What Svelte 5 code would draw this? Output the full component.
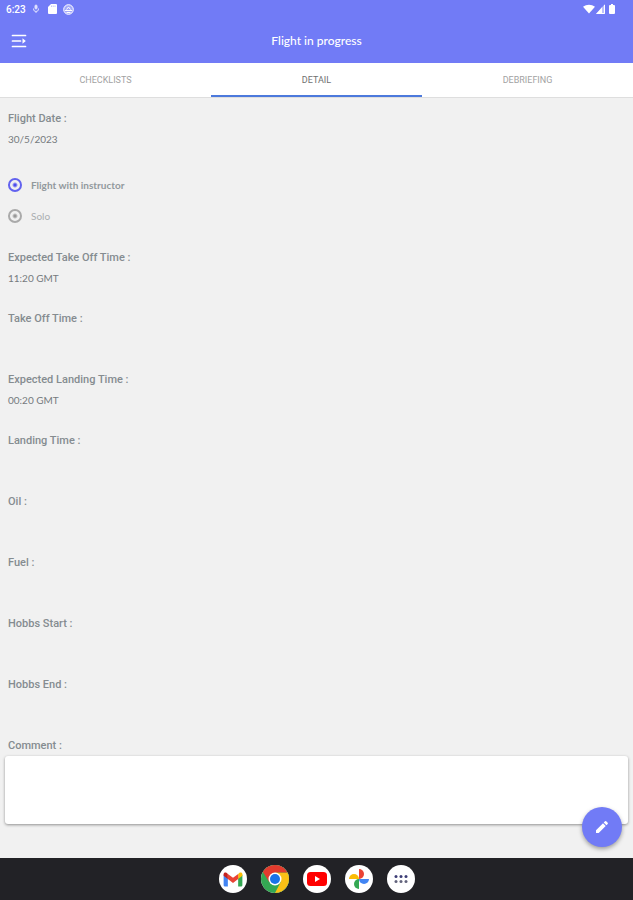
<script lang="ts">
  const tabs = ['CHECKLISTS', 'DETAIL', 'DEBRIEFING'];
  const fields = [
    { label: 'Expected Take Off Time :', value: '11:20 GMT' },
    { label: 'Take Off Time :', value: '' },
    { label: 'Expected Landing Time :', value: '00:20 GMT' },
    { label: 'Landing Time :', value: '' },
    { label: 'Oil :', value: '' },
    { label: 'Fuel :', value: '' },
    { label: 'Hobbs Start :', value: '' },
    { label: 'Hobbs End :', value: '' },
  ];

  let activeTab = $state('DETAIL');
  let crew = $state('instructor');
  let comment = $state('');
</script>

<div class="screen">
  <header class="top">
    <div class="status">
      <div class="status-side">
        <span>6:23</span>
        <svg width="8" height="10" viewBox="0 0 8 10" fill="none" stroke="#dfe1ff">
          <rect x="3" y="1" width="2" height="4" rx="1" fill="#dfe1ff" />
          <path d="M1.5 4.5V5a2.500 2.500 0 0 0 5 0v-.5M4 7.500V9" />
        </svg>
        <svg class="card" width="9" height="10" viewBox="0 0 9 10">
          <path d="M3 0h5a1 1 0 0 1 1 1v8a1 1 0 0 1-1 1H1a1 1 0 0 1-1-1V3z" fill="#fff" />
          <path d="M3.500 1.500v1.500M5.200 1.500v1.500M7 1.500v1.500" stroke="#aab0fb" stroke-width=".7" />
        </svg>
        <svg width="11" height="11" viewBox="0 0 11 11" fill="none" stroke="#fff">
          <circle cx="5.500" cy="5.500" r="4.800" fill="#a2a8fa" />
          <path d="M2 6.500h7M3.500 8.500h4" />
          <path d="M3.500 5.500l2-2.500 2 2.500" />
        </svg>
      </div>
      <div class="status-side icons">
        <svg width="12" height="10" viewBox="0 0 12 10" fill="#fff">
          <path d="M0 2.800C3.500 0 8.500 0 12 2.800L6 9.500z" />
        </svg>
        <svg width="9" height="10" viewBox="0 0 9 10">
          <path d="M9 0v10H0z" fill="#bdc1fd" />
          <path d="M6 3.300V10H0z" fill="#fff" />
          <path d="M8.500 1v8.500H1" fill="none" stroke="#fff" />
        </svg>
        <svg class="battery" width="6" height="10" viewBox="0 0 6 10" fill="#fff">
          <path d="M2 0h2v1h1a1 1 0 0 1 1 1v7a1 1 0 0 1-1 1H1a1 1 0 0 1-1-1V2a1 1 0 0 1 1-1h1z" />
        </svg>
      </div>
    </div>
    <div class="bar">
      <button class="menu" type="button" aria-label="Menu">
        <svg width="16" height="14" viewBox="0 0 16 14" fill="none" stroke="#fff" stroke-width="1.700" stroke-linecap="round">
          <path d="M1.500 1.500h13M1.500 7h8M1.500 12.500h13" />
          <path d="M11.500 4.200L14.800 7l-3.300 2.800z" fill="#fff" stroke="none" />
        </svg>
      </button>
      <h1>Flight in progress</h1>
    </div>
  </header>

  <nav class="tabs">
    {#each tabs as tab (tab)}
      <button type="button" class:active={tab === activeTab} onclick={() => (activeTab = tab)}>
        {tab}
      </button>
    {/each}
  </nav>

  <main>
    <div class="field">
      <h2>Flight Date :</h2>
      <p>30/5/2023</p>
    </div>

    <div class="crew">
      <label class:selected={crew === 'instructor'}>
        <input type="radio" name="crew" value="instructor" bind:group={crew} />
        <span>Flight with instructor</span>
      </label>
      <label class:selected={crew === 'solo'}>
        <input type="radio" name="crew" value="solo" bind:group={crew} />
        <span>Solo</span>
      </label>
    </div>

    {#each fields as field (field.label)}
      <div class="field">
        <h2>{field.label}</h2>
        <p>{field.value}</p>
      </div>
    {/each}

    <label class="comment-label" for="comment">Comment :</label>
    <textarea id="comment" bind:value={comment}></textarea>

    <button class="fab" type="button" aria-label="Edit flight">
      <svg width="16" height="16" viewBox="0 0 16 16" fill="#fff">
        <path d="M2 11.300V14h2.700l7-7L9 4.300zM13.700 5a.9.9 0 0 0 0-1.200l-1.500-1.500a.9.9 0 0 0-1.200 0L9.700 3.600l2.700 2.700z" />
      </svg>
    </button>
  </main>

  <footer class="dock">
    <button type="button" aria-label="Gmail">
      <svg width="20" height="15" viewBox="0 0 20 16">
        <path d="M0 3v11a1.500 1.500 0 0 0 1.500 1.500H4.500V6z" fill="#4285f4" />
        <path d="M20 3v11a1.500 1.500 0 0 1-1.500 1.500h-3V6z" fill="#34a853" />
        <path d="M15.500 2v5.500L20 4V2.500c0-2-2-2.500-3.300-1.500z" fill="#fbbc04" />
        <path d="M4.500 2v5.500L0 4V2.500C0 .5 2 0 3.300 1z" fill="#c5221f" />
        <path d="M4.500 2L10 6l5.500-4v5.500L10 11.700 4.500 7.500z" fill="#ea4335" />
      </svg>
    </button>
    <button type="button" aria-label="Chrome">
      <svg width="28" height="28" viewBox="0 0 28 28">
        <circle cx="14" cy="14" r="14" fill="#34a853" />
        <path d="M14 7.500H26.400A14 14 0 0 1 14 28l5.600-10.700z" fill="#fbc116" />
        <path d="M1.900 7A14 14 0 0 1 26.400 7.500H14L8.400 17.300z" fill="#e33b2e" />
        <circle cx="14" cy="14" r="6.500" fill="#fff" />
        <circle cx="14" cy="14" r="5" fill="#1a73e8" />
      </svg>
    </button>
    <button type="button" aria-label="YouTube">
      <svg width="20" height="14" viewBox="0 0 20 14">
        <rect width="20" height="14" rx="3.500" fill="#f00" />
        <path d="M8 4v6l5-3z" fill="#fff" />
      </svg>
    </button>
    <button type="button" aria-label="Photos">
      <svg width="20" height="20" viewBox="0 0 20 20">
        <path d="M10 0a5 5 0 0 1 0 10z" fill="#ea4335" />
        <path d="M20 10a5 5 0 0 1-10 0z" fill="#4285f4" />
        <path d="M10 20a5 5 0 0 1 0-10z" fill="#34a853" />
        <path d="M0 10a5 5 0 0 1 10 0z" fill="#fbbc04" />
      </svg>
    </button>
    <button type="button" aria-label="All apps">
      <svg width="14" height="10" viewBox="0 0 14 10" fill="#3c3d76">
        <circle cx="2" cy="2.500" r="1.500" />
        <circle cx="7" cy="2.500" r="1.500" />
        <circle cx="12" cy="2.500" r="1.500" />
        <g fill="#62637c">
          <circle cx="2" cy="7.500" r="1.500" />
          <circle cx="7" cy="7.500" r="1.500" />
          <circle cx="12" cy="7.500" r="1.500" />
        </g>
      </svg>
    </button>
  </footer>
</div>

<style>
  :global(body) {
    margin: 0;
  }
  .screen {
    min-height: 100vh;
    display: flex;
    flex-direction: column;
    background: #f1f1f1;
    font-family: Lato, sans-serif;
    color: #757a7e;
  }
  button {
    border: 0;
    padding: 0;
    background: none;
    font-family: inherit;
    cursor: pointer;
  }
  svg {
    display: block;
  }
  .top {
    background: #717bf6;
    color: #fff;
  }
  .status {
    display: flex;
    justify-content: space-between;
    height: 18px;
    padding: 0 18px 0 6px;
    font-family: Roboto, sans-serif;
    font-size: 10px;
    font-weight: 500;
  }
  .status-side {
    display: flex;
    align-items: center;
    gap: 6px;
  }
  .card {
    margin-left: 2px;
  }
  .icons {
    gap: 1px;
  }
  .battery {
    margin-left: 3px;
  }
  .bar {
    display: grid;
    grid-template-columns: 32px 1fr 32px;
    align-items: center;
    height: 45px;
  }
  .menu {
    padding-left: 11px;
  }
  h1 {
    margin: 0;
    text-align: center;
    font-size: 12px;
    font-weight: 500;
  }
  .tabs {
    display: flex;
    height: 34px;
    background: #fff;
    border-bottom: 1px solid #dedede;
  }
  .tabs button {
    flex: 1;
    border-top: 2px solid transparent;
    border-bottom: 2px solid transparent;
    font-family: Roboto, sans-serif;
    font-size: 9px;
    color: #a2a2a2;
  }
  .tabs .active {
    border-bottom-color: #4c79dc;
    color: #707070;
  }
  main {
    position: relative;
    flex: 1;
    display: flex;
    flex-direction: column;
    padding: 10px 5px 34px;
  }
  .field {
    padding: 0 3px;
    margin-bottom: 19px;
  }
  h2,
  .comment-label {
    margin: 0;
    font-family: Roboto, sans-serif;
    font-size: 11px;
    font-weight: 500;
    line-height: 21px;
    color: #858c90;
  }
  p {
    min-height: 21px;
    margin: 0;
    font-size: 10px;
    line-height: 21px;
  }
  .crew {
    padding: 0 3px;
    margin-bottom: 16px;
  }
  .crew label {
    display: flex;
    align-items: center;
    gap: 9px;
    height: 31px;
    font-size: 10px;
    color: #aaaeb0;
  }
  .crew .selected {
    font-weight: 700;
    color: #92999d;
  }
  .crew input {
    appearance: none;
    width: 14px;
    height: 14px;
    margin: 0;
    border: 2px solid #aaa;
    border-radius: 50%;
    background: radial-gradient(circle, #999 1px, transparent 3px);
  }
  .crew input:checked {
    border-color: #6262ef;
    background: radial-gradient(circle, #4d4ded 1px, transparent 3px);
  }
  .comment-label {
    padding: 0 3px;
  }
  textarea {
    height: 68px;
    box-sizing: border-box;
    padding: 8px;
    border: 0;
    border-radius: 3px;
    background: #fff;
    box-shadow: 0 1px 3px rgba(0, 0, 0, 0.4);
    font: inherit;
    font-size: 10px;
    resize: none;
  }
  .fab {
    position: absolute;
    right: 11px;
    bottom: 11px;
    display: grid;
    place-items: center;
    width: 40px;
    height: 40px;
    border-radius: 50%;
    background: #717bf6;
    box-shadow: 0 2px 4px rgba(0, 0, 0, 0.35);
  }
  .dock {
    display: flex;
    align-items: center;
    justify-content: center;
    gap: 14px;
    height: 42px;
    background: #222226;
  }
  .dock button {
    display: grid;
    place-items: center;
    width: 28px;
    height: 28px;
    border-radius: 50%;
    background: #fff;
  }
</style>
